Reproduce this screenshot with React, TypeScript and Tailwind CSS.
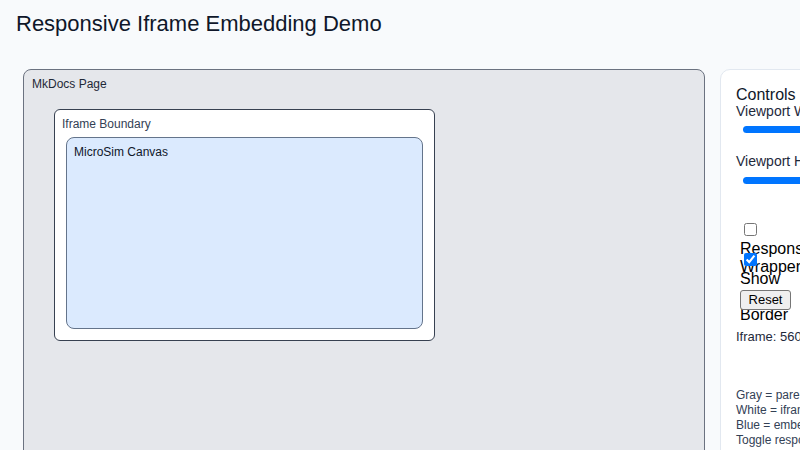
import React from "react";

export default function App() {
  return (
    <div className="w-[800px] h-[450px] overflow-hidden bg-[#f8fafc] font-['Liberation_Sans',Arial,sans-serif]">
      <h1 className="pl-4 pt-[11px] text-[22px] leading-[26px] text-[#0f172a]">
        Responsive Iframe Embedding Demo
      </h1>
      <div className="mt-[32px] flex gap-[15px] pl-[23px]">
        <div className="h-[420px] w-[682px] shrink-0 rounded-[8px] border-[1.5px] border-[#6b7280] bg-[#e5e7eb] pl-[30px] pt-[7px]">
          <div className="-ml-[22px] text-[12px] leading-[14px] text-[#1f2937]">MkDocs Page</div>
          <div className="mt-[18px] flex h-[232px] w-[381px] flex-col rounded-[6px] border border-[#374151] bg-white px-[11px] pb-[11px] pt-[7px]">
            <div className="-ml-[4px] text-[12px] leading-[14px] text-[#334155]">Iframe Boundary</div>
            <div className="mt-[6px] flex-1 rounded-[8px] border border-[#64748b] bg-[#dbeafe] px-[7px] pt-[7px]">
              <div className="text-[12px] leading-[14px] text-[#0f172a]">MicroSim Canvas</div>
            </div>
          </div>
        </div>
        <div className="flex h-[420px] w-[260px] shrink-0 flex-col items-start rounded-[10px] border-[1.5px] border-[#e2e8f0] bg-white pl-[15px] pt-[16px]">
          <div className="text-[16px] leading-[18px] text-[#0f172a]">Controls</div>
          <div className="-mt-[1px] whitespace-nowrap text-[14px] leading-[16px] text-[#1e293b]">Viewport Width</div>
          <div className="ml-[7px] mt-[7px] h-[7px] w-[200px] rounded-full bg-[#0075ff]" />
          <div className="mt-[20px] whitespace-nowrap text-[14px] leading-[16px] text-[#1e293b]">Viewport Height</div>
          <div className="ml-[7px] mt-[8px] h-[7px] w-[200px] rounded-full bg-[#0075ff]" />

          <input type="checkbox" readOnly className="m-0 ml-[8px] mt-[39px] h-[13px] w-[13px]" />
          <div className="ml-[4px] mt-[3px] whitespace-nowrap text-[16px] leading-[19px] text-black">Responsive</div>
          <input type="checkbox" checked readOnly className="relative m-0 ml-[8px] -mt-[5px] h-[13px] w-[13px]" />
          <div className="ml-[4px] -mt-[9px] whitespace-nowrap text-[16px] leading-[19px] text-black">Wrapper</div>
          <div className="ml-[4px] -mt-[7px] whitespace-nowrap text-[16px] leading-[19px] text-black">Show</div>
          <button className="relative ml-[4px] mt-[2px] h-[20px] w-[51px] rounded-[3px] border border-[#767676] bg-[#efefef] text-[13px] leading-[16px] text-black">
            Reset
          </button>
          <div className="ml-[4px] -mt-[5px] whitespace-nowrap text-[16px] leading-[19px] text-black">Border</div>
          <div className="mt-[5px] whitespace-nowrap text-[13px] leading-[15px] text-[#1e293b]">Iframe: 560 x 400</div>

          <div className="mt-[44px] whitespace-nowrap text-[12px] leading-[15px] text-[#334155]">
            <div>Gray = parent MkDocs page</div>
            <div>White = iframe boundary</div>
            <div>Blue = embedded canvas</div>
            <div>Toggle responsive wrapper</div>
          </div>
        </div>
      </div>
    </div>
  );
}
